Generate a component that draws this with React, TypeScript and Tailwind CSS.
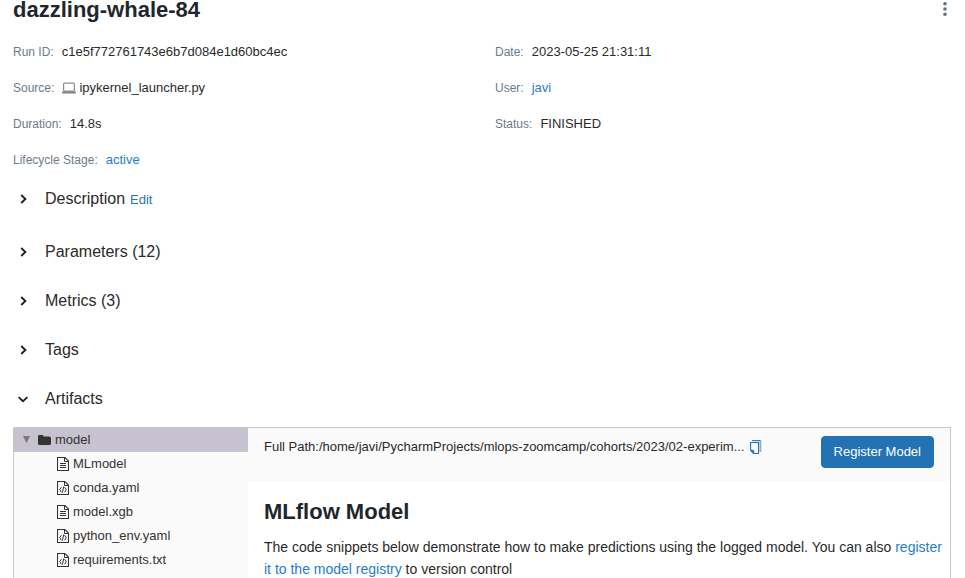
import React from "react";

const LINK = "text-[#267dc6]";

function Field({ label, children }: { label: string; children: React.ReactNode }) {
  return (
    <div className="flex items-center gap-2 leading-5">
      <dt className="text-xs leading-5 text-[#6b7b8c]">{label}:</dt>
      <dd className="flex items-center gap-1 text-[13px] leading-5">{children}</dd>
    </div>
  );
}

function Laptop() {
  return (
    <svg width="14" height="12" viewBox="0 0 14 12" className="-mr-px" aria-hidden="true">
      <rect x="1.6" y="1.1" width="10.8" height="8" rx="1" fill="#fff" stroke="#8c8c8c" strokeWidth="1.2" />
      <path d="M0 9.6h14v1.2q0 .7-1 .7H1q-1 0-1-.7z" fill="#808080" />
    </svg>
  );
}

function Chevron({ open }: { open?: boolean }) {
  return (
    <svg width="12" height="12" viewBox="0 0 12 12" fill="none" stroke="#1c1c1c" strokeWidth="1.8" aria-hidden="true">
      <path d={open ? "M1.6 4.2 6 8.2l4.4-4" : "M4.2 2 8.4 6l-4.2 4"} />
    </svg>
  );
}

function Section({ title, open }: { title: string; open?: boolean }) {
  return (
    <button type="button" aria-expanded={!!open} className="flex h-6 items-center gap-4 pl-1 text-base">
      <Chevron open={open} />
      <span>{title}</span>
    </button>
  );
}

function FileIcon({ code }: { code?: boolean }) {
  return (
    <svg width="12" height="14" viewBox="0 0 12 14" fill="none" stroke="#333" aria-hidden="true">
      <path d="M.5.5h7.4l3.6 3.6v9.4H.5z" strokeWidth="1.1" />
      <path d="M7.5.8v3.7h3.7" strokeWidth="1" />
      {code ? (
        <path d="M4.4 6.2 2.7 8.7l1.7 2.5M7.6 6.2l1.7 2.5-1.7 2.5M6.7 5.6l-1.3 6" strokeWidth="1" />
      ) : (
        <path d="M3 6.5h6M3 8.5h6M3 10.5h6" strokeWidth="1" />
      )}
    </svg>
  );
}

function Folder() {
  return (
    <svg width="13" height="12" viewBox="0 0 13 12" fill="#333" aria-hidden="true">
      <path d="M0 2.4Q0 1 1.4 1h2.8q1.4 0 1.4 1.4v.2h5.6Q13 2.6 13 4.2v5.2q0 1.6-1.6 1.6H1.6Q0 11 0 9.4z" />
    </svg>
  );
}

function CopyIcon() {
  return (
    <svg width="12" height="14" viewBox="0 0 12 14" fill="none" stroke="#2374bb" aria-hidden="true">
      <path d="M2 .6h8.6" strokeWidth="1.1" />
      <path d="M10.4.6v11.4" strokeWidth="1.8" strokeOpacity=".55" />
      <path d="M.6 2.5h7.9v11H3.6L.6 10.5z" strokeWidth="1.1" />
      <path d="M.6 10.2h3.2v3.2z" fill="#2374bb" strokeWidth=".6" />
    </svg>
  );
}

const files = [
  { name: "MLmodel" },
  { name: "conda.yaml", code: true },
  { name: "model.xgb" },
  { name: "python_env.yaml", code: true },
  { name: "requirements.txt", code: true },
];

export default function App() {
  return (
    <main className="flex h-screen flex-col overflow-hidden bg-white pl-[13px] pr-[14px] font-['Liberation_Sans',Arial,sans-serif] text-[#2a2a2a]">
      <header className="flex items-start justify-between">
        <h1 className="text-[22px] font-bold leading-5 text-[#1f272d]">dazzling-whale-84</h1>
        <button type="button" aria-label="More actions" className="flex h-[18px] w-3 items-center justify-center">
          <svg width="4" height="14" viewBox="0 0 4 14" fill="#5f7281" aria-hidden="true">
            <circle cx="2" cy="1.8" r="1.8" />
            <circle cx="2" cy="7" r="1.8" />
            <circle cx="2" cy="12.2" r="1.8" />
          </svg>
        </button>
      </header>

      <dl className="mt-[22px] grid grid-cols-2 gap-x-[26px] gap-y-4">
        <Field label="Run ID">c1e5f772761743e6b7d084e1d60bc4ec</Field>
        <Field label="Date">2023-05-25 21:31:11</Field>
        <Field label="Source">
          <Laptop />
          ipykernel_launcher.py
        </Field>
        <Field label="User">
          <a href="#user" className={LINK}>javi</a>
        </Field>
        <Field label="Duration">14.8s</Field>
        <Field label="Status">FINISHED</Field>
        <Field label="Lifecycle Stage">
          <a href="#stage" className={LINK}>active</a>
        </Field>
      </dl>

      <div className="mt-[17px] flex flex-col items-start gap-[25px]">
        <div className="flex items-center gap-[5px] pb-1">
          <Section title="Description" />
          <button type="button" className="pt-[2px] text-[13px] text-[#2374bb]">Edit</button>
        </div>
        <Section title="Parameters (12)" />
        <Section title="Metrics (3)" />
        <Section title="Tags" />
        <Section title="Artifacts" open />
      </div>

      <section className="mt-4 flex flex-1 border border-b-0 border-[#c8c8c8]">
        <nav aria-label="Artifacts" className="w-[234px] shrink-0 bg-[#fafafa] text-[13px] leading-5 text-[#333]">
          <button type="button" className="flex h-6 w-full items-center bg-[#c6c2d0] pl-[9px]">
            <svg width="8" height="8" viewBox="0 0 8 8" fill="#777" aria-hidden="true">
              <path d="M0 0h7L3.500 7z" />
            </svg>
            <span className="flex items-center gap-1 pl-[7px]">
              <Folder />
              model
            </span>
          </button>
          <ul>
            {files.map((f) => (
              <li key={f.name}>
                <button type="button" className="flex h-6 items-center gap-1 pl-[43px]">
                  <FileIcon code={f.code} />
                  {f.name}
                </button>
              </li>
            ))}
          </ul>
        </nav>
        <div className="min-w-0 flex-1">
          <div className="flex items-start justify-between gap-4 bg-[#fafafa] pb-[13px] pl-4 pr-4 pt-2">
            <div className="flex min-w-0 items-center gap-[6px] text-[13px] leading-[22px]">
              <span className="truncate">Full Path:/home/javi/PycharmProjects/mlops-zoomcamp/cohorts/2023/02-experim...</span>
              <button type="button" aria-label="Copy path" className="shrink-0"><CopyIcon /></button>
            </div>
            <button type="button" className="h-8 shrink-0 rounded border border-[#2272b4] bg-[#2272b4] px-3 text-[13px] leading-5 text-white">
              Register Model
            </button>
          </div>
          <div className="pl-4 pr-1 pt-4">
            <h2 className="text-[22px] font-bold leading-[30px] text-[#1f272d]">MLflow Model</h2>
            <p className="mt-[9px] text-sm leading-[22px]">
              The code snippets below demonstrate how to make predictions using the logged model. You can also{" "}
              <a href="#registry" className={LINK}>register it to the model registry</a> to version control
            </p>
          </div>
        </div>
      </section>
    </main>
  );
}
